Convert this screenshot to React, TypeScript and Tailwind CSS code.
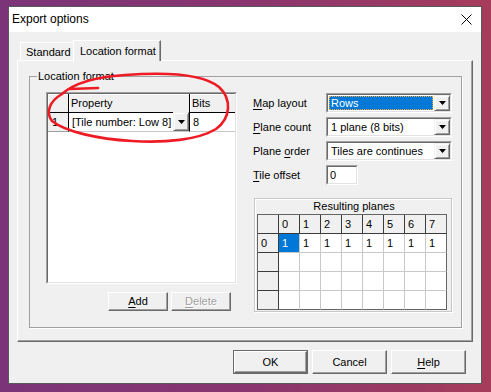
import React from "react";

const raised =
  "border border-t-white border-l-white border-r-[#696969] border-b-[#696969] shadow-[inset_-1px_-1px_0_#a0a0a0] bg-[#f0f0f0]";

function Arrow() {
  return (
    <svg width="7" height="4" viewBox="0 0 7 4">
      <polygon points="0,0 7,0 3.5,4" fill="#000" />
    </svg>
  );
}

function DropButton({ className = "" }: { className?: string }) {
  return (
    <div
      className={`flex w-[16px] items-center justify-center border border-t-[#f0f0f0] border-l-[#f0f0f0] border-r-[#696969] border-b-[#696969] bg-[#f0f0f0] shadow-[inset_1px_1px_0_#fff,inset_-1px_-1px_0_#a0a0a0] ${className}`}
    >
      <Arrow />
    </div>
  );
}

function Sunken({ className = "", children }: { className?: string; children: React.ReactNode }) {
  return (
    <div className={`flex border border-t-[#a0a0a0] border-l-[#a0a0a0] border-r-white border-b-white ${className}`}>
      <div className="flex flex-1 border border-t-[#696969] border-l-[#696969] border-r-[#e3e3e3] border-b-[#e3e3e3] bg-white">
        {children}
      </div>
    </div>
  );
}

function Combo({ value, focused }: { value: string; focused?: boolean }) {
  return (
    <Sunken className="h-[20px] w-[126px]">
      <div className="flex flex-1 p-[1px]">
        {focused ? (
          <div className="flex flex-1 items-center bg-[#0078d7] pl-[2px] text-white outline-1 -outline-offset-1 outline-dotted outline-[#f5a53a]">
            {value}
          </div>
        ) : (
          <div className="flex flex-1 items-center pl-[2px]">{value}</div>
        )}
      </div>
      <DropButton />
    </Sunken>
  );
}

function Mn({ children }: { children: React.ReactNode }) {
  return <span className="underline underline-offset-[2px]">{children}</span>;
}

function FieldRow({ label, children }: { label: React.ReactNode; children: React.ReactNode }) {
  return (
    <div className="flex h-[20px] items-center">
      <div className="w-[73px]">{label}</div>
      {children}
    </div>
  );
}

function PlanesGrid() {
  const cols = [0, 1, 2, 3, 4, 5, 6, 7];
  const rows = [0, 1, 2, 3];
  const head = "flex items-center bg-[#f0f0f0] border-r border-b border-[#3c3c3c] pl-[3px]";
  return (
    <div className="grid w-[190px] grid-cols-[21px_repeat(8,21px)] grid-rows-[repeat(5,19px)] border-l border-t border-[#646464]">
      <div className={head} />
      {cols.map((c) => (
        <div key={c} className={c === 7 ? `${head} border-r-[#646464]` : head}>
          {c}
        </div>
      ))}
      {rows.map((r) => (
        <React.Fragment key={r}>
          <div className={r === 3 ? `${head} border-b-[#646464]` : head}>{r === 0 ? "0" : ""}</div>
          {cols.map((c) => {
            const sel = r === 0 && c === 0;
            return (
              <div
                key={c}
                className={`flex items-center border-r border-b border-[#c8c8c8] pl-[3px] ${
                  sel ? "bg-[#0078d7] text-white" : "bg-white"
                } ${c === 7 ? "border-r-[#646464]" : ""} ${r === 3 ? "border-b-[#646464]" : ""}`}
              >
                {r === 0 ? "1" : ""}
              </div>
            );
          })}
        </React.Fragment>
      ))}
    </div>
  );
}

function LocationGrid() {
  return (
    <Sunken className="h-[192px] w-[191px]">
      <div className="flex flex-1 flex-col">
        <div className="flex h-[19px]">
          <div className="w-[21px] border-r border-b border-black bg-[#f0f0f0] shadow-[inset_1px_1px_0_#fff]" />
          <div className="flex w-[121px] items-center border-r border-b border-black bg-[#f0f0f0] pl-[2px] shadow-[inset_1px_1px_0_#fff]">
            Property
          </div>
          <div className="flex flex-1 items-center border-b border-black bg-[#f0f0f0] pl-[2px] shadow-[inset_1px_1px_0_#fff]">
            Bits
          </div>
        </div>
        <div className="flex h-[19px]">
          <div className="flex w-[21px] items-center border-r border-b border-r-black border-b-[#a0a0a0] bg-[#f0f0f0] pl-[4px]">
            1
          </div>
          <div className="flex w-[121px] border-r border-b border-r-black border-b-[#c8c8c8] bg-white">
            <div className="flex flex-1 items-center pl-[3px]">[Tile number: Low 8]</div>
            <DropButton className="-mt-px" />
          </div>
          <div className="flex flex-1 items-center border-b border-[#c8c8c8] bg-white pl-[3px]">8</div>
        </div>
      </div>
    </Sunken>
  );
}

function Button({ children, className = "", disabled }: { children: React.ReactNode; className?: string; disabled?: boolean }) {
  return (
    <div
      className={`flex items-center justify-center ${raised} ${
        disabled ? "text-[#a0a0a0] [text-shadow:1px_1px_0_#fff]" : ""
      } ${className}`}
    >
      {children}
    </div>
  );
}

export default function App() {
  return (
    <div className="relative h-[392px] w-[491px] overflow-hidden bg-linear-to-r from-[#7a3478] via-[#89356f] to-[#a63c5b] pt-[6px] pl-[8px] font-['Liberation_Sans',Arial,sans-serif] text-[11px] leading-[13px] text-black">
      <div className="flex h-[378px] w-[474px] flex-col border border-[#595959] bg-[#f0f0f0]">
        {/* title bar */}
        <div className="flex h-[25px] items-center justify-between bg-white pl-[3px] pr-[9px] text-[12px]">
          <span>Export options</span>
          <svg width="11" height="11" viewBox="0 0 11 11">
            <path d="M0.5 0.5L10.5 10.5M10.5 0.5L0.5 10.5" stroke="#000" strokeWidth="1" />
          </svg>
        </div>

        <div className="flex flex-1 flex-col px-[8px] pt-[8px]">
          {/* tabs */}
          <div className="flex h-[20px] items-end pl-[3px]">
            <div className="flex h-[18px] w-[53px] items-center border-t border-l border-white pl-[5px] pt-[2px]">Standard</div>
            <div className="relative z-10 -mb-px flex h-[21px] w-[88px] items-center border-t border-l border-r border-t-white border-l-white border-r-[#696969] bg-[#f0f0f0] pl-[6px] shadow-[inset_-1px_0_0_#a0a0a0]">
              Location format
            </div>
          </div>

          {/* tab page */}
          <div className="h-[282px] w-[456px] border border-t-white border-l-white border-r-[#696969] border-b-[#696969] pl-[11px] pt-[9px] shadow-[inset_-1px_-1px_0_#a0a0a0]">
            <fieldset className="h-[258px] w-[433px] border border-[#a0a0a0] shadow-[1px_1px_0_#fff]">
              <legend className="ml-[7px] px-[1px]">Location format</legend>
              <div className="flex pl-[16px] pt-[9px]">
                <div className="flex w-[191px] flex-col">
                  <LocationGrid />
                  <div className="mt-[8px] flex justify-end gap-[3px] pr-[6px]">
                    <Button className="h-[19px] w-[60px]">
                      <Mn>A</Mn>dd
                    </Button>
                    <Button className="h-[19px] w-[60px]" disabled>
                      <Mn>D</Mn>elete
                    </Button>
                  </div>
                </div>

                <div className="ml-[16px] flex flex-col pt-[1px]">
                  <div className="flex flex-col gap-[4px]">
                    <FieldRow label={<><Mn>M</Mn>ap layout</>}>
                      <Combo value="Rows" focused />
                    </FieldRow>
                    <FieldRow label={<><Mn>P</Mn>lane count</>}>
                      <Combo value="1 plane (8 bits)" />
                    </FieldRow>
                    <FieldRow label={<>Plane <Mn>o</Mn>rder</>}>
                      <Combo value="Tiles are continues" />
                    </FieldRow>
                    <FieldRow label={<><Mn>T</Mn>ile offset</>}>
                      <Sunken className="h-[20px] w-[32px]">
                        <div className="flex flex-1 items-center pl-[2px]">0</div>
                      </Sunken>
                    </FieldRow>
                  </div>

                  <div className="mt-[13px] ml-[1px] flex h-[114px] w-[198px] flex-col border border-[#c8c8c8] pl-[2px] pt-[1px] shadow-[inset_1px_1px_0_#fff,1px_1px_0_#fff]">
                    <div className="h-[14px] text-center">Resulting planes</div>
                    <PlanesGrid />
                  </div>
                </div>
              </div>
            </fieldset>
          </div>

          {/* dialog buttons */}
          <div className="mt-[8px] flex justify-end gap-[4px] pr-[7px]">
            <div className="border border-[#6a6a6a]">
              <Button className="h-[22px] w-[73px]">OK</Button>
            </div>
            <Button className="h-[24px] w-[75px]">Cancel</Button>
            <Button className="h-[24px] w-[75px]">
              <Mn>H</Mn>elp
            </Button>
          </div>
        </div>
      </div>

      {/* red hand-drawn marking */}
      <svg className="pointer-events-none absolute inset-0" width="491" height="392" viewBox="0 0 491 392">
        <path
          d="M70 89 L98 88 M62 94 C74 83 95 77 125 75 C165 72 203 74 219 87 C232 99 231 118 216 129 C198 140 165 143 132 141 C98 139 66 132 52 121 C45 112 50 101 62 94"
          fill="none"
          stroke="#ee1b24"
          strokeWidth="2.6"
          strokeLinecap="round"
          strokeLinejoin="round"
        />
      </svg>
    </div>
  );
}
